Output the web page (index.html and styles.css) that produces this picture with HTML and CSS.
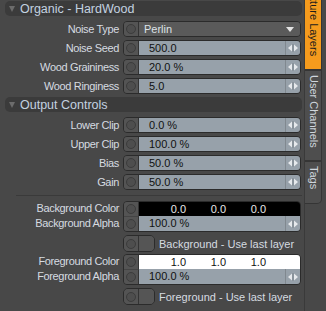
FILE: index.html
```html
<!DOCTYPE html>
<html>
<head>
<meta charset="utf-8">
<link rel="stylesheet" href="styles.css">
</head>
<body>
<div class="app">
  <div class="panel">
    <div class="section-head"><span class="tri"></span>Organic - HardWood</div>
    <div class="rows">
      <div class="row"><div class="label">Noise Type</div>
        <div class="ctl"><div class="btn"><i></i></div><div class="dropdown"><span>Perlin</span><span class="dd"></span></div></div></div>
      <div class="row"><div class="label">Noise Seed</div>
        <div class="ctl"><div class="btn"><i></i></div><div class="field">500.0</div><div class="spin"><svg width="14" height="14" viewBox="0 0 14 14"><path d="M2 7 L6 3.5 V10.5 Z M12 7 L8 3.5 V10.5 Z" fill="#e6e9ec"/><path d="M7 3 V11" stroke="#7d858c" stroke-width="1"/></svg></div></div></div>
      <div class="row"><div class="label">Wood Graininess</div>
        <div class="ctl"><div class="btn"><i></i></div><div class="field">20.0 %</div><div class="spin"><svg width="14" height="14" viewBox="0 0 14 14"><path d="M2 7 L6 3.5 V10.5 Z M12 7 L8 3.5 V10.5 Z" fill="#e6e9ec"/><path d="M7 3 V11" stroke="#7d858c" stroke-width="1"/></svg></div></div></div>
      <div class="row"><div class="label">Wood Ringiness</div>
        <div class="ctl"><div class="btn"><i></i></div><div class="field">5.0</div><div class="spin"><svg width="14" height="14" viewBox="0 0 14 14"><path d="M2 7 L6 3.5 V10.5 Z M12 7 L8 3.5 V10.5 Z" fill="#e6e9ec"/><path d="M7 3 V11" stroke="#7d858c" stroke-width="1"/></svg></div></div></div>
    </div>
    <div class="section-head"><span class="tri"></span>Output Controls</div>
    <div class="rows">
      <div class="row"><div class="label">Lower Clip</div>
        <div class="ctl"><div class="btn"><i></i></div><div class="field">0.0 %</div><div class="spin"><svg width="14" height="14" viewBox="0 0 14 14"><path d="M2 7 L6 3.5 V10.5 Z M12 7 L8 3.5 V10.5 Z" fill="#e6e9ec"/><path d="M7 3 V11" stroke="#7d858c" stroke-width="1"/></svg></div></div></div>
      <div class="row"><div class="label">Upper Clip</div>
        <div class="ctl"><div class="btn"><i></i></div><div class="field">100.0 %</div><div class="spin"><svg width="14" height="14" viewBox="0 0 14 14"><path d="M2 7 L6 3.5 V10.5 Z M12 7 L8 3.5 V10.5 Z" fill="#e6e9ec"/><path d="M7 3 V11" stroke="#7d858c" stroke-width="1"/></svg></div></div></div>
      <div class="row"><div class="label">Bias</div>
        <div class="ctl"><div class="btn"><i></i></div><div class="field">50.0 %</div><div class="spin"><svg width="14" height="14" viewBox="0 0 14 14"><path d="M2 7 L6 3.5 V10.5 Z M12 7 L8 3.5 V10.5 Z" fill="#e6e9ec"/><path d="M7 3 V11" stroke="#7d858c" stroke-width="1"/></svg></div></div></div>
      <div class="row"><div class="label">Gain</div>
        <div class="ctl"><div class="btn"><i></i></div><div class="field">50.0 %</div><div class="spin"><svg width="14" height="14" viewBox="0 0 14 14"><path d="M2 7 L6 3.5 V10.5 Z M12 7 L8 3.5 V10.5 Z" fill="#e6e9ec"/><path d="M7 3 V11" stroke="#7d858c" stroke-width="1"/></svg></div></div></div>
    </div>
    <div class="sep"></div>
    <div class="colors">
      <div class="cgroup">
        <div class="clabels"><div class="label">Background Color</div><div class="label">Background Alpha</div></div>
        <div class="cctl">
          <div class="btn2"><div class="btn"><i></i></div><div class="btn"><i></i></div></div>
          <div class="cfields">
            <div class="color black"><span>0.0</span><span>0.0</span><span>0.0</span></div>
            <div class="arow"><div class="field">100.0 %</div><div class="spin"><svg width="14" height="14" viewBox="0 0 14 14"><path d="M2 7 L6 3.5 V10.5 Z M12 7 L8 3.5 V10.5 Z" fill="#e6e9ec"/><path d="M7 3 V11" stroke="#7d858c" stroke-width="1"/></svg></div></div>
          </div>
        </div>
      </div>
      <div class="trow"><div class="toggle"><div class="btn"><i></i></div><div class="knob"></div></div><span class="tlabel">Background - Use last layer</span></div>
      <div class="cgroup">
        <div class="clabels"><div class="label">Foreground Color</div><div class="label">Foreground Alpha</div></div>
        <div class="cctl">
          <div class="btn2"><div class="btn"><i></i></div><div class="btn"><i></i></div></div>
          <div class="cfields">
            <div class="color white"><span>1.0</span><span>1.0</span><span>1.0</span></div>
            <div class="arow"><div class="field">100.0 %</div><div class="spin"><svg width="14" height="14" viewBox="0 0 14 14"><path d="M2 7 L6 3.5 V10.5 Z M12 7 L8 3.5 V10.5 Z" fill="#e6e9ec"/><path d="M7 3 V11" stroke="#7d858c" stroke-width="1"/></svg></div></div>
          </div>
        </div>
      </div>
      <div class="trow"><div class="toggle"><div class="btn"><i></i></div><div class="knob"></div></div><span class="tlabel">Foreground - Use last layer</span></div>
    </div>
  </div>
  <div class="tabs">
    <div class="tab active"><span>Texture Layers</span></div>
    <div class="tab"><span>User Channels</span></div>
    <div class="tab last"><span>Tags</span></div>
  </div>
</div>
</body>
</html>
```
FILE: styles.css
```css
html, body { margin: 0; padding: 0; }
body {
  background: #484848;
  font-family: "Liberation Sans", Arial, sans-serif;
  font-size: 11px;
  letter-spacing: -0.35px;
  color: #d6dbe0;
}
.app {
  display: flex;
  width: 326px;
  height: 311px;
  overflow: hidden;
}
.panel {
  width: 304px;
  flex: none;
}
.section-head {
  margin: 1px 2px 0 5px;
  height: 15px;
  background: #3b3b3b;
  border-radius: 5px;
  display: flex;
  align-items: center;
  color: #c3d2e0;
  font-size: 12.5px;
  letter-spacing: 0;
}
.tri {
  width: 0;
  height: 0;
  border-left: 3.5px solid transparent;
  border-right: 3.5px solid transparent;
  border-top: 6px solid #6c6c6c;
  margin: 0 5px 0 4px;
}
.rows {
  display: flex;
  flex-direction: column;
  gap: 3px;
  padding: 5px 0 2px;
}
.row {
  display: grid;
  grid-template-columns: 119px 178px;
  column-gap: 4px;
  height: 16px;
  align-items: center;
}
.label {
  text-align: right;
  white-space: nowrap;
}
.ctl {
  display: flex;
  height: 16px;
  box-sizing: border-box;
  border: 1px solid #2b2b2b;
  border-radius: 4px;
  overflow: hidden;
}
.btn {
  width: 14px;
  flex: none;
  background: #545454;
  border-right: 1px solid #333;
  display: flex;
  align-items: center;
  justify-content: center;
}
.btn i {
  width: 8px;
  height: 8px;
  border-radius: 50%;
  border: 1px solid #3c3c3c;
  background: #4e4e4e;
}
.field {
  flex: 1;
  background: #97a1aa;
  color: #111;
  padding-left: 10px;
  line-height: 14px;
  letter-spacing: 0;
}
.spin {
  width: 14px;
  flex: none;
  background: #97a1aa;
  border-left: 1px solid #80888f;
  display: flex;
  align-items: center;
  justify-content: center;
}
.dropdown {
  flex: 1;
  background: #5a5a5a;
  color: #dde2e6;
  padding-left: 5px;
  line-height: 14px;
  display: flex;
  justify-content: space-between;
  align-items: center;
  letter-spacing: 0;
}
.dd {
  width: 0;
  height: 0;
  border-left: 4px solid transparent;
  border-right: 4px solid transparent;
  border-top: 5px solid #e4e4e4;
  margin-right: 6px;
}
.sep {
  height: 1px;
  background: #3a3a3a;
  margin: 3px 2px 5px 16px;
}
.colors {
  display: flex;
  flex-direction: column;
}
.cgroup {
  display: grid;
  grid-template-columns: 119px 178px;
  column-gap: 4px;
}
.clabels {
  display: flex;
  flex-direction: column;
}
.clabels .label {
  height: 15px;
  line-height: 14px;
}
.cctl {
  display: flex;
  height: 31px;
  box-sizing: border-box;
  border: 1px solid #2b2b2b;
  border-radius: 4px;
  overflow: hidden;
}
.btn2 {
  display: flex;
  flex-direction: column;
}
.btn2 .btn { flex: 1; }
.btn2 .btn:first-child { border-bottom: 1px solid #444; }
.cfields {
  flex: 1;
  display: flex;
  flex-direction: column;
}
.color {
  height: 14px;
  display: flex;
  padding-left: 7px;
  line-height: 14px;
  letter-spacing: 0;
}
.color span {
  width: 40px;
  text-align: right;
}
.black { background: #000; color: #e8e8e8; }
.white { background: #fff; color: #111; }
.arow {
  flex: 1;
  display: flex;
}
.trow {
  display: flex;
  align-items: center;
  padding-left: 123px;
  height: 17px;
  margin: 3px 0 2px;
}
.toggle {
  display: flex;
  width: 32px;
  height: 17px;
  box-sizing: border-box;
  border: 1px solid #2b2b2b;
  border-radius: 5px;
  overflow: hidden;
}
.knob {
  flex: 1;
  background: #555;
}
.tlabel {
  margin-left: 4px;
  white-space: nowrap;
  letter-spacing: 0;
}
.tabs {
  flex: none;
  width: 22px;
  display: flex;
  flex-direction: column;
  border-left: 1px solid #3a3a3a;
  margin-top: -22px;
}
.tab {
  width: 17px;
  box-sizing: border-box;
  writing-mode: vertical-rl;
  background: #4e4e4e;
  color: #cfd6dd;
  border: 1px solid #353535;
  border-left: none;
  padding: 4px 0 12px 0;
  line-height: 15px;
  font-size: 11px;
  letter-spacing: 0;
}
.tab.active {
  background: #f59b1d;
  color: #1c1c1c;
  padding-top: 5px;
  height: 92px;
}
.tab.last {
  border-radius: 0 0 5px 0;
  padding-bottom: 14px;
}
```
